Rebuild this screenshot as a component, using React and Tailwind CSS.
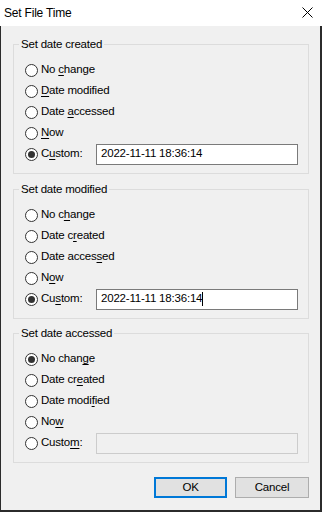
import React from 'react';

const Radio = ({ checked }) => (
  <span className="w-[13px] h-[13px] rounded-full border border-[#333333] bg-white flex items-center justify-center shrink-0">
    {checked && <span className="w-[7px] h-[7px] rounded-full bg-[#333333]" />}
  </span>
);

// label given as [before, access key, after]
const Label = ({ parts }) => (
  <span className="ml-[3px] whitespace-nowrap">
    {parts[0]}
    <u className="underline-offset-[2px]">{parts[1]}</u>
    {parts[2]}
  </span>
);

const DateField = ({ value, caret, disabled }) =>
  disabled ? (
    <div className="ml-auto w-[202px] h-[21px] border border-[#cccccc] bg-[#f0f0f0]" />
  ) : (
    <div className="ml-auto w-[202px] h-[21px] border border-[#7a7a7a] bg-white flex items-center pl-[4px] whitespace-nowrap">
      {value}
      {caret && <span className="w-[1px] h-[14px] bg-black" />}
    </div>
  );

const Group = ({ title, options, selected, field }) => (
  <fieldset className="border border-[#dcdcdc] px-[5px] pt-[7.5px] pb-[8.5px]">
    <legend className="px-[2px] leading-[16px]">{title}</legend>
    <div className="px-[6px] pr-[5px]">
      {options.map((parts, i) => (
        <div key={i} className="flex items-center h-[21px]">
          <Radio checked={i === selected} />
          <Label parts={parts} />
          {i === options.length - 1 && field}
        </div>
      ))}
    </div>
  </fieldset>
);

export default function App() {
  return (
    <div
      className="w-[322px] h-[512px] flex flex-col text-black text-[11.5px] tracking-[-0.2px]"
      style={{ fontFamily: '"Liberation Sans", Arial, sans-serif' }}
    >
      {/* title bar */}
      <div className="h-[26px] bg-white flex items-center justify-between pl-[4px] pr-[9px] shrink-0">
        <span className="text-[12px]">Set File Time</span>
        <svg width="11" height="11" viewBox="0 0 11 11" className="mb-[1px]">
          <path d="M0.5 0.5 L10.5 10.5 M10.5 0.5 L0.5 10.5" stroke="#000" strokeWidth="1" fill="none" />
        </svg>
      </div>

      <div className="flex-1 bg-[#f0f0f0] border-l border-r-2 border-b-2 border-[#2b2b2b] pl-[12px] pr-[11px] pt-[10px] flex flex-col">
        <Group
          title="Set date created"
          selected={4}
          options={[
            ['No ', 'c', 'hange'],
            ['', 'D', 'ate modified'],
            ['Date ', 'a', 'ccessed'],
            ['', 'N', 'ow'],
            ['C', 'u', 'stom:'],
          ]}
          field={<DateField value="2022-11-11 18:36:14" />}
        />
        <div className="mt-[7px]">
          <Group
            title="Set date modified"
            selected={4}
            options={[
              ['No c', 'h', 'ange'],
              ['Date c', 'r', 'eated'],
              ['Date acces', 's', 'ed'],
              ['N', 'o', 'w'],
              ['Cu', 's', 'tom:'],
            ]}
            field={<DateField value="2022-11-11 18:36:14" caret />}
          />
        </div>
        <div className="mt-[6px]">
          <Group
            title="Set date accessed"
            selected={0}
            options={[
              ['No chan', 'g', 'e'],
              ['Date cr', 'e', 'ated'],
              ['Date modi', 'f', 'ied'],
              ['No', 'w', ''],
              ['Custo', 'm', ':'],
            ]}
            field={<DateField disabled />}
          />
        </div>

        <div className="mt-[14px] flex justify-end gap-[8px]">
          <button className="w-[73px] h-[21px] bg-[#e1e1e1] border-2 border-[#0078d7] flex items-center justify-center">
            OK
          </button>
          <button className="w-[74px] h-[21px] bg-[#e1e1e1] border border-[#adadad] flex items-center justify-center">
            Cancel
          </button>
        </div>
      </div>
    </div>
  );
}
